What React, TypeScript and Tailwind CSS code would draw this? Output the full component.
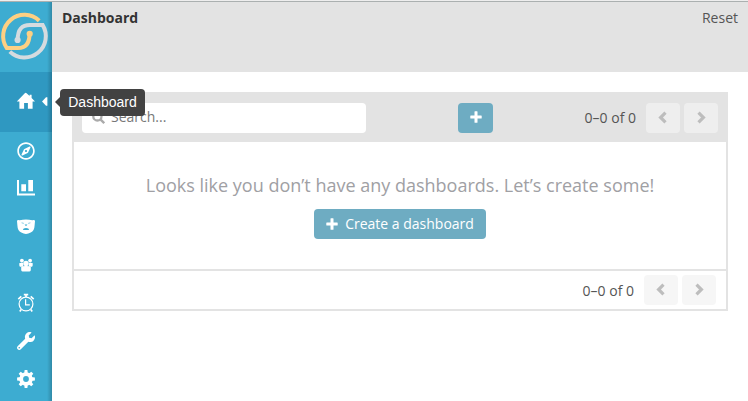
import type { ReactNode } from "react";
import { FaRegCompass, FaWrench } from "react-icons/fa";

function Logo() {
  return (
    <svg className="block h-[70px] w-[52px]" viewBox="0 2 52 70" fill="none" strokeWidth="4">
      <path d="M39.2 20.8 A21.3 21.3 0 0 0 6.8 48.1 H18 C25.5 48.1 29.5 43.5 29.5 34" stroke="#fdd083" />
      <circle cx="29.7" cy="33.8" r="3.1" fill="#fdd083" />
      <path d="M9.8 51.6 A21.3 21.3 0 0 0 42.7 25.1 H30 C22 25.1 17.7 29 17.7 39.8" stroke="#d5dbdf" />
      <circle cx="17.6" cy="40" r="3.1" fill="#d5dbdf" />
    </svg>
  );
}

function Icon({ children }: { children: ReactNode }) {
  return (
    <svg className="block size-5" viewBox="0 0 20 20" fill="white">
      {children}
    </svg>
  );
}

function HomeIcon() {
  return (
    <Icon>
      <path d="M8.8 1.2Q9.7.4 10.6 1.2L13.6 4V2.8H15.6V6.1L19 9.6H16.6V16.7H11.9V11H8.1V16.7H3.4V9.6H.8Z" />
    </Icon>
  );
}

function StatsIcon() {
  return (
    <Icon>
      <path d="M1 1H3V14.6H19V16.6H1ZM5.3 5.3H10V12.3H5.3ZM12.3 1H17V12.3H12.3Z" />
    </Icon>
  );
}

function BearIcon() {
  return (
    <Icon>
      <path d="M1 4Q1.2 2.4 3.6 3.2Q10 1.7 16.4 3.2Q18.8 2.4 19 4L18.6 8.5Q18.4 14 14.7 15.6Q10 18.4 5.3 15.6Q1.6 14 1.4 8.5Z" />
      <path d="M5.6 5.8 7.8 6.4M12.2 6.4 14.4 5.8" stroke="#3dacd1" strokeWidth=".6" fill="none" />
      <path d="M8.6 7.4H11.4L10.5 8.8H9.5ZM7 12.9Q7 10.9 10 10.9T13 12.9Z" fill="#3dacd1" />
    </Icon>
  );
}

function TeamIcon() {
  return (
    <Icon>
      <circle cx="5.9" cy="5.6" r="1.9" />
      <circle cx="14.1" cy="5.6" r="1.9" />
      <path d="M3.2 8.2Q5 7.4 7.2 8V11.8H4Q3.2 11.2 3.2 8.2ZM16.8 8.2Q15 7.4 12.8 8V11.8H16Q16.8 11.2 16.8 8.2Z" />
      <circle cx="10" cy="8.4" r="2.7" />
      <path d="M5.2 12.1Q7 10.8 10 11Q13 10.8 14.8 12.1V15.2Q14.3 16.5 13.4 16.5H6.6Q5.7 16.5 5.2 15.2Z" />
    </Icon>
  );
}

function AlarmIcon() {
  return (
    <Icon>
      <g fill="none" stroke="white">
        <circle cx="10" cy="11" r="6.9" strokeWidth="1.2" />
        <path d="M9.6 6.2V11.9H13.8" strokeWidth="1.2" />
        <path d="M7.8 1.7H12.2M10 1.5V4M2.3 6.2 5.3 3.3M14.7 3.3 17.7 6.2M5.2 16.6 3.8 18.5M14.8 16.6 16.2 18.5" strokeWidth="1.7" />
      </g>
    </Icon>
  );
}

const teeth = [0, 45, 90, 135, 180, 225, 270, 315];

function GearIcon() {
  return (
    <Icon>
      {teeth.map((angle) => (
        <path key={angle} d="M8.1 5 8.6 1.1H11.4L11.9 5Z" transform={`rotate(${angle} 10 10)`} />
      ))}
      <circle cx="10" cy="10" r="4.8" fill="none" stroke="white" strokeWidth="3.8" />
    </Icon>
  );
}

function PlusIcon() {
  return (
    <svg className="block size-3" viewBox="0 0 12 12" fill="white">
      <path d="M4.5.8Q4.5.3 5 .3H7Q7.5.3 7.5.8V4.5H11.2Q11.7 4.5 11.7 5V7Q11.7 7.5 11.2 7.5H7.5V11.2Q7.5 11.7 7 11.7H5Q4.5 11.7 4.5 11.2V7.5H.8Q.3 7.5.3 7V5Q.3 4.5.8 4.5H4.5Z" />
    </svg>
  );
}

function Pager({ shade, label }: { shade: string; label: string }) {
  return (
    <div className="flex items-center gap-1">
      <span className={`mr-1.5 text-sm text-[#555] ${label}`}>0–0 of 0</span>
      {["M8.5 1.6 3.6 6.5 8.5 11.4", "M3.5 1.6 8.4 6.5 3.5 11.4"].map((d) => (
        <button key={d} className={`flex h-[30px] w-[34px] items-center justify-center rounded-[4px] ${shade}`}>
          <svg className="mb-0.5 size-[13px]" viewBox="0 0 13 13" fill="none" stroke="#bdbdbd" strokeWidth="3.2">
            <path d={d} />
          </svg>
        </button>
      ))}
    </div>
  );
}

export default function App() {
  const items = [
    <FaRegCompass className="size-[18px]" />,
    <StatsIcon />,
    <BearIcon />,
    <TeamIcon />,
    <AlarmIcon />,
    <FaWrench className="size-[18px]" />,
    <GearIcon />,
  ];
  return (
    <div className="flex h-[401px] w-[748px] flex-col overflow-hidden bg-white font-['Open_Sans',sans-serif] text-sm">
      <div className="h-0.5 shrink-0 border-b border-[#abb0b0] bg-[#eee]" />
      <div className="flex min-h-0 flex-1">
        <nav className="relative w-[52px] shrink-0 bg-[#3dacd1] text-white">
          <Logo />
          <div className="relative flex h-[60px] items-center justify-center bg-[#2f98c1]">
            <HomeIcon />
            <svg className="absolute top-[25px] right-1 h-[9px] w-1.5" viewBox="0 0 6 9" fill="white">
              <path d="M0 4.5 4 .2H5.4V8.8H4Z" />
            </svg>
          </div>
          {items.map((icon, i) => (
            <div key={i} className="flex h-[38px] items-center justify-center">{icon}</div>
          ))}
          <div className="absolute inset-y-0 right-0 w-[5px] bg-linear-to-r from-transparent to-black/20" />
          <div className="absolute top-[87px] left-[60px] z-10 flex h-[27px] w-[85px] items-center justify-center rounded-[4px] bg-[#424242] pb-px font-['Liberation_Sans',Arial,sans-serif] text-sm text-white">
            <span className="absolute -left-[5px] border-y-[5px] border-r-[5px] border-y-transparent border-r-[#424242]" />
            Dashboard
          </div>
        </nav>
        <main className="min-w-0 flex-1">
          <header className="flex h-[70px] justify-between bg-[#e3e3e3] px-2.5 pt-1.5 leading-5">
            <h1 className="font-bold text-[#333]">Dashboard</h1>
            <span className="text-[#555]">Reset</span>
          </header>
          <section className="mt-5 ml-5 w-[656px] border-2 border-[#e3e3e3]">
            <div className="flex h-12 items-center bg-[#e3e3e3] pr-2 pl-2">
              <div className="flex h-[30px] w-[284px] items-center rounded-[4px] bg-white pb-0.5 pl-2.5 text-[#777]">
                <svg className="mr-1.5 size-[13px]" viewBox="0 0 13 13" fill="none" stroke="#aaa" strokeWidth="2.3">
                  <circle cx="5.4" cy="5.4" r="4.1" />
                  <path d="m8.4 8.4 3.8 3.8" />
                </svg>
                Search...
              </div>
              <button className="ml-[92px] flex h-[30px] w-[35px] items-center justify-center rounded-[4px] bg-[#6eacc2] pb-0.5">
                <PlusIcon />
              </button>
              <div className="ml-auto">
                <Pager shade="bg-[#eee]" label="pt-0" />
              </div>
            </div>
            <div className="flex h-[129px] flex-col items-center border-b-2 border-[#e3e3e3] pt-[30px]">
              <p className="text-lg leading-[27px] whitespace-nowrap text-[#a0a0a4]">Looks like you don’t have any dashboards. Let’s create some!</p>
              <button className="mt-2.5 flex h-[30px] w-[172px] items-center justify-center gap-[7px] rounded-[4px] bg-[#6eacc2] whitespace-nowrap text-white">
                <PlusIcon />
                Create a dashboard
              </button>
            </div>
            <div className="flex h-[38px] items-center justify-end pr-2.5">
              <Pager shade="bg-[#f6f6f6]" label="pt-0.5" />
            </div>
          </section>
        </main>
      </div>
    </div>
  );
}
